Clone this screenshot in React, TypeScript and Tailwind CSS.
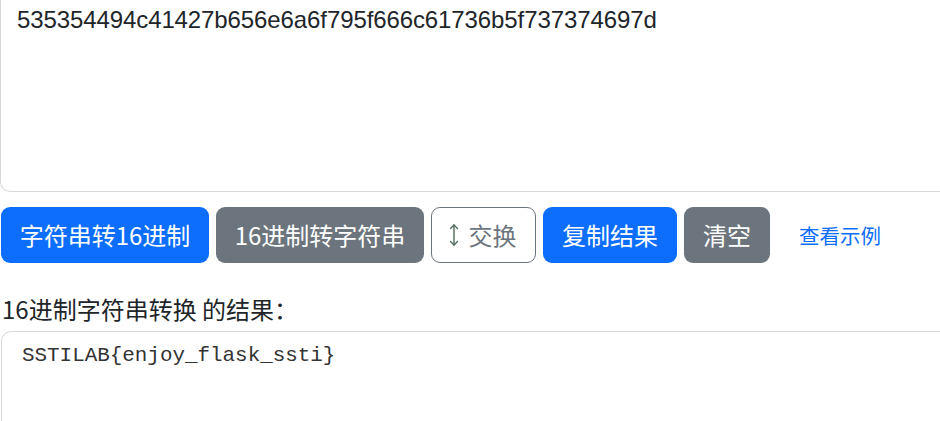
import React, { useState } from 'react';

const hexValue = '535354494c41427b656e6a6f795f666c61736b5f737374697d';
const resultValue = 'SSTILAB{enjoy_flask_ssti}';

const cjk = "font-['Noto_Sans_CJK_SC',sans-serif]";

function SwapIcon() {
  return (
    <svg width="10" height="24" viewBox="0 0 10 24" fill="none" stroke="#4b6a5a" strokeWidth="1.4" strokeLinecap="round" strokeLinejoin="round">
      <path d="M5 2v20" />
      <path d="M1.5 5.5L5 2l3.5 3.5" />
      <path d="M1.5 18.5L5 22l3.5-3.5" />
    </svg>
  );
}

export default function App() {
  const [input] = useState(hexValue);
  const [output] = useState(resultValue);

  return (
    <div className="w-[940px] h-[421px] overflow-hidden bg-white">
      {/* input box, scrolled so its top edge is off screen */}
      <div className="w-[960px] h-[192px] border border-t-0 border-[#d6d9dc] rounded-b-[10px] pl-[16px] pt-[2px] font-['Liberation_Sans',sans-serif] text-[24px] leading-[36px] text-[#212529] tracking-[-0.1px]">
        {input}
      </div>

      <div className={`flex items-center gap-[7px] mt-[15px] ml-[1px] ${cjk}`}>
        <button className="w-[208px] h-[56px] rounded-[9px] bg-[#0d6efd] text-white text-[24px] leading-[36px]">
          字符串转16进制
        </button>
        <button className="w-[208px] h-[56px] rounded-[9px] bg-[#6c757d] text-white text-[24px] leading-[36px]">
          16进制转字符串
        </button>
        <button className="w-[105px] h-[56px] rounded-[9px] border border-[#6c757d] bg-white text-[#6c757d] text-[24px] leading-[36px] flex items-center justify-center gap-[10px] pr-[2px]">
          <SwapIcon />
          <span>交换</span>
        </button>
        <button className="w-[134px] h-[56px] rounded-[9px] bg-[#0d6efd] text-white text-[24px] leading-[36px]">
          复制结果
        </button>
        <button className="w-[86px] h-[56px] rounded-[9px] bg-[#6c757d] text-white text-[24px] leading-[36px]">
          清空
        </button>
        <a className="ml-[22px] text-[#0d6efd] text-[20.5px] leading-[30px] cursor-pointer">查看示例</a>
      </div>

      <div className={`mt-[30px] ml-[2px] text-[24px] leading-[32px] text-[#212529] ${cjk}`}>
        16进制字符串转换 的结果：
      </div>

      <div className="mt-[6px] ml-[1px] w-[960px] h-[120px] border border-b-0 border-[#d6d9dc] rounded-t-[10px] pl-[20px] pt-[9px] font-['Liberation_Mono',monospace] text-[20.9px] leading-[30px] text-[#333]">
        {output}
      </div>
    </div>
  );
}
